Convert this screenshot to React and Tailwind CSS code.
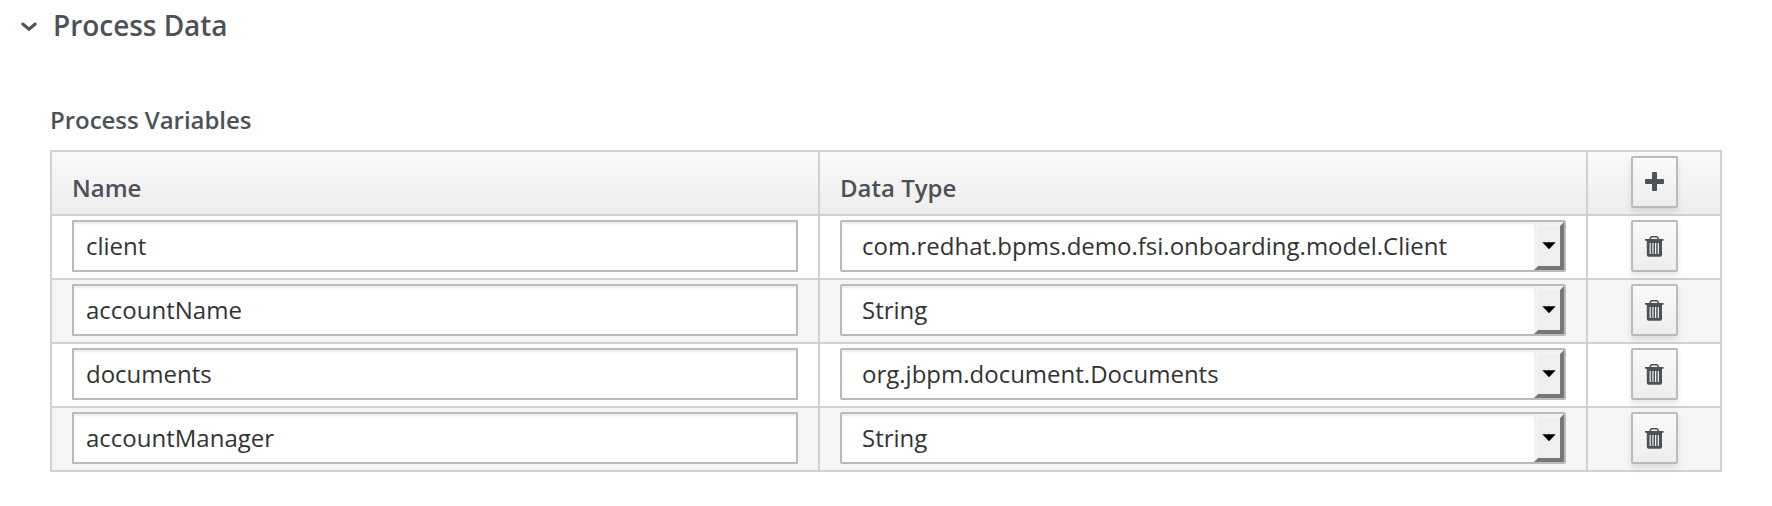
const variables = [
  { name: "client", type: "com.redhat.bpms.demo.fsi.onboarding.model.Client" },
  { name: "accountName", type: "String" },
  { name: "documents", type: "org.jbpm.document.Documents" },
  { name: "accountManager", type: "String" },
];

function TrashIcon() {
  return (
    <svg width="19" height="22" viewBox="0 0 19 22" fill="none" className="text-[#4d5258]">
      <path d="M5.2 4.5V3.4Q5.6 1.8 7 1.8H11.4Q12.8 1.8 13.2 3.4V4.5" stroke="currentColor" strokeWidth="1.6" />
      <path d="M0 4H18.6V5.4L17 5.9V19.7Q17 21.7 15 21.7H3.8Q1.8 21.7 1.8 19.7V5.9L0 5.4Z" fill="currentColor" />
      <path d="M5.2 8V19M7.9 8V19M10.6 8V19M13.3 8V19" stroke="#f3f3f3" strokeWidth="1.2" />
    </svg>
  );
}

function PlusIcon() {
  return (
    <svg width="19" height="20" viewBox="0 0 19 20" className="text-[#4d5258]">
      <rect x="0" y="7" width="19" height="5" rx="1" fill="currentColor" />
      <rect x="7" y="0" width="5" height="19" rx="1" fill="currentColor" />
    </svg>
  );
}

function IconButton({ label, children }) {
  return (
    <button
      aria-label={label}
      className="flex h-[52px] w-[47px] items-center justify-center rounded-[2px] border-2 border-[#bbb] bg-linear-to-b from-[#fafafa] to-[#ededed] pr-px shadow-[0_4px_6px_rgba(3,3,3,0.1)]"
    >
      {children}
    </button>
  );
}

function TypeSelect({ value }) {
  return (
    <button className="flex h-[52px] w-full items-stretch rounded-[2px] border-2 border-[#bbb] bg-white text-left text-2xl text-[#333] shadow-[inset_0_2px_2px_rgba(3,3,3,0.075)]">
      <span className="min-w-0 flex-1 self-center pl-5 leading-8">{value}</span>
      <span className="flex w-[30px] items-center justify-center border-4 border-t-[#f3f3f3] border-r-[#777] border-b-[#777] border-l-[#f3f3f3] bg-[#efefef]">
        <svg width="14" height="8" viewBox="0 0 14 8">
          <path d="M0.3 0.3H13.7L7 7.2Z" fill="#000" />
        </svg>
      </span>
    </button>
  );
}

export default function App() {
  return (
    <main className="h-[506px] w-[1772px] overflow-hidden bg-white font-['Open_Sans',sans-serif] text-[#4d5258]">
      <header className="flex h-[52px] items-center pl-5">
        <svg width="18" height="14" viewBox="0 0 18 14" fill="none">
          <path d="M2.8 5L9 10.2L15.2 5" stroke="currentColor" strokeWidth="3" strokeLinecap="round" />
        </svg>
        <h2 className="pb-0.5 pl-[15px] text-[28px] leading-9 font-semibold tracking-[-0.04px]">Process Data</h2>
      </header>
      <section className="pt-[52px] pl-[50px]">
        <h3 className="h-[46px] text-2xl leading-8 font-semibold tracking-[-0.04px]">Process Variables</h3>
        <div className="w-[1672px] border-2 border-[#d1d1d1]">
          <div className="grid h-[62px] grid-cols-[768px_768px_132px] bg-linear-to-b from-[#fafafa] to-[#ededed] text-2xl leading-8 font-semibold">
            <div className="border-r-2 border-[#d1d1d1] pt-5 pl-5">Name</div>
            <div className="border-r-2 border-[#d1d1d1] pt-5 pl-5">Data Type</div>
            <div className="flex justify-center pt-1 pl-px">
              <IconButton label="Add variable">
                <PlusIcon />
              </IconButton>
            </div>
          </div>
          {variables.map((variable) => (
            <div
              key={variable.name}
              className="grid h-16 grid-cols-[768px_768px_132px] border-t-2 border-[#d1d1d1] even:bg-white odd:bg-[#f5f5f5]"
            >
              <div className="border-r-2 border-[#d1d1d1] px-5 pt-1">
                <input
                  defaultValue={variable.name}
                  className="h-[52px] w-full border-2 border-[#bbb] bg-white px-3 pb-0.5 text-2xl text-[#333] shadow-[inset_0_2px_2px_rgba(3,3,3,0.075)]"
                />
              </div>
              <div className="border-r-2 border-[#d1d1d1] px-5 pt-1">
                <TypeSelect value={variable.type} />
              </div>
              <div className="flex justify-center pt-1 pl-px">
                <IconButton label="Delete variable">
                  <TrashIcon />
                </IconButton>
              </div>
            </div>
          ))}
        </div>
      </section>
    </main>
  );
}
